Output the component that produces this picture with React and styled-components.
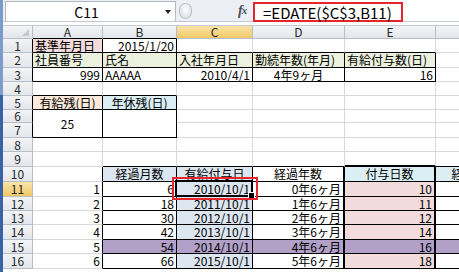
import React from 'react';
import styled, { createGlobalStyle } from 'styled-components';

const GlobalStyle = createGlobalStyle`
  html, body { margin: 0; padding: 0; background: #fff; }
  body { width: 459px; height: 272px; overflow: hidden; font-family: "Noto Sans CJK JP", sans-serif; }
`;

const COLS = ['A', 'B', 'C', 'D', 'E', 'F'];
const COL_W = [70, 74, 76, 92, 91, 92];
const ROW_H = [14, 15, 14, 14, 14, 13, 15, 14, 15, 15, 15, 14, 14, 15, 14, 15];

const C = {
  pink: '#f2dcdb',
  green: '#ebf1de',
  peach: '#fde9d9',
  aqua: '#daeef3',
  blue: '#dce6f1',
  purple: '#b1a0c7',
};

const GRID = '1px solid #d9d9d9';
const BLACK = '1px solid #000';
const THICK = '2px solid #000';
const HDR = '1px solid #b6bec8';

const boxes = [
  { c0: 0, c1: 1, r0: 1, r1: 1 },
  { c0: 0, c1: 4, r0: 2, r1: 3 },
  { c0: 0, c1: 1, r0: 5, r1: 7 },
  { c0: 1, c1: 5, r0: 10, r1: 16 },
];
const boxed = (r, c) => boxes.some((b) => r >= b.r0 && r <= b.r1 && c >= b.c0 && c <= b.c1);

const cells = {
  A1: { v: '基準年月日', bg: C.pink },
  B1: { v: '2015/1/20', a: 'right' },
  A2: { v: '社員番号', bg: C.green },
  B2: { v: '氏名', bg: C.green },
  C2: { v: '入社年月日', bg: C.green },
  D2: { v: '勤続年数(年月)', bg: C.green },
  E2: { v: '有給付与数(日)', bg: C.green },
  A3: { v: '999', a: 'right' },
  B3: { v: 'AAAAA' },
  C3: { v: '2010/4/1', a: 'right' },
  D3: { v: '4年9ヶ月', a: 'center' },
  E3: { v: '16', a: 'right' },
  A5: { v: '有給残(日)', a: 'center', bg: C.peach },
  B5: { v: '年休残(日)', a: 'center', bg: C.aqua },
  A6: { v: '25', a: 'center', span: 2 },
  B6: { v: '', span: 2 },
  B10: { v: '経過月数', a: 'center', bg: C.blue },
  C10: { v: '有給付与日', a: 'center', bg: C.blue },
  D10: { v: '経過年数', a: 'center' },
  E10: { v: '付与日数', a: 'center', bg: C.aqua },
  F10: { v: '経過付与日', a: 'center', bg: C.aqua },
};
const months = [6, 18, 30, 42, 54, 66];
const days = [10, 11, 12, 14, 16, 18];
for (let i = 0; i < 6; i++) {
  const r = 11 + i;
  const hl = r === 15 ? C.purple : null;
  cells['A' + r] = { v: String(i + 1), a: 'right' };
  cells['B' + r] = { v: String(months[i]), a: 'right', bg: hl };
  cells['C' + r] = { v: `${2010 + i}/10/1`, a: 'right', bg: hl || C.blue };
  cells['D' + r] = { v: `${i}年6ヶ月`, a: 'right', bg: hl };
  cells['E' + r] = { v: String(days[i]), a: 'right', bg: hl || C.pink };
  cells['F' + r] = { v: '', bg: hl };
}

const Window = styled.div`
  display: flex;
  width: 459px;
  height: 272px;
  overflow: hidden;
`;

const Frame = styled.div`
  flex: 0 0 3px;
  background: linear-gradient(to bottom, #7d9bcb 0, #7d9bcb 95px, #3a62a7 95px, #3a62a7 100%);
`;

const Main = styled.div`
  flex: 1;
  display: flex;
  flex-direction: column;
  min-width: 0;
`;

const FormulaBar = styled.div`
  display: flex;
  align-items: stretch;
  height: 22px;
  box-sizing: border-box;
  background: #eceff4;
  border-bottom: 1px solid #c3cad3;
`;

const NameBox = styled.div`
  margin: 1px 0 0 2px;
  width: 171px;
  height: 20px;
  box-sizing: border-box;
  background: #fff;
  border: 1px solid #b3bac4;
  border-bottom: none;
  display: flex;
  align-items: center;
  font-family: "Noto Sans CJK JP", sans-serif;
  font-size: 14px;
  line-height: 1;
  color: #000;
`;

const NameText = styled.span`
  flex: 1;
  text-align: center;
  padding-left: 2px;
`;

const DropArrow = styled.span`
  width: 0;
  height: 0;
  margin-right: 4px;
  border-left: 3.5px solid transparent;
  border-right: 3.5px solid transparent;
  border-top: 4px solid #222;
`;

const Handle = styled.div`
  margin: 3px 0 0 3px;
  width: 13px;
  height: 16px;
  box-sizing: border-box;
  border-radius: 7px;
  border: 1px solid #b8bec7;
  background: radial-gradient(ellipse at 50% 40%, #ffffff 0, #e4e7eb 60%, #c9ced5 100%);
`;

const Fx = styled.div`
  margin-left: 46px;
  width: 14px;
  display: flex;
  align-items: center;
  font-family: "Liberation Serif", serif;
  font-style: italic;
  font-weight: bold;
  font-size: 14px;
  line-height: 1;
  color: #4a4f56;
  letter-spacing: -1px;
  & small { font-size: 11px; }
`;

const Input = styled.div`
  flex: 1;
  margin-left: 1px;
  background: #fff;
  display: flex;
  align-items: flex-start;
  padding-top: 2px;
`;

const FormulaText = styled.div`
  width: 150px;
  height: 20px;
  box-sizing: border-box;
  border: 2px solid #e5262d;
  padding-left: 8px;
  display: flex;
  align-items: center;
  font-family: "Noto Sans CJK JP", sans-serif;
  font-size: 15px;
  line-height: 1;
  color: #000;
  white-space: nowrap;
`;

const Gap = styled.div`
  height: 3px;
  background: #fff;
  border-bottom: 1px solid #c3cad3;
`;

const Sheet = styled.div`
  display: grid;
  grid-template-columns: 30px ${COL_W.map((w) => w + 'px').join(' ')};
  grid-template-rows: 13px ${ROW_H.map((h) => h + 'px').join(' ')};
  font-family: "Noto Sans CJK JP", sans-serif;
`;

const HeadCell = styled.div`
  grid-row: ${(p) => p.$row};
  grid-column: ${(p) => p.$col};
  box-sizing: border-box;
  display: flex;
  align-items: center;
  justify-content: center;
  font-size: 12px;
  line-height: 1;
  color: #27292c;
  background: ${(p) => (p.$sel
    ? 'linear-gradient(to bottom, #f9e4a8, #f2c866)'
    : 'linear-gradient(to bottom, #f3f4f6, #e3e6ea)')};
  border-right: ${(p) => p.$r || HDR};
  border-bottom: ${(p) => p.$b || HDR};
  position: relative;
`;

const CornerMark = styled.span`
  position: absolute;
  right: 3px;
  bottom: 2px;
  width: 0;
  height: 0;
  border-left: 7px solid transparent;
  border-bottom: 7px solid #c3c8cf;
`;

const justify = { left: 'flex-start', center: 'center', right: 'flex-end' };

const Cell = styled.div`
  grid-row: ${(p) => p.$row} / span ${(p) => p.$span || 1};
  grid-column: ${(p) => p.$col};
  box-sizing: border-box;
  min-width: 0;
  white-space: nowrap;
  position: relative;
  display: flex;
  align-items: center;
  justify-content: ${(p) => justify[p.$align || 'left']};
  padding: 0 2px 0 2px;
  background: ${(p) => p.$bg || '#fff'};
  border-right: ${(p) => p.$r};
  border-bottom: ${(p) => p.$b};
  font-size: 12px;
  line-height: 1;
  color: #000;
  z-index: ${(p) => (p.$sel ? 2 : 'auto')};
`;

const Selection = styled.span`
  position: absolute;
  left: -2px;
  top: -2px;
  right: -1px;
  bottom: -1px;
  border: 2px solid #000;
  pointer-events: none;
`;

const FillHandle = styled.span`
  position: absolute;
  right: -3px;
  bottom: -3px;
  width: 5px;
  height: 5px;
  background: #000;
  border: 1px solid #fff;
`;

const Callout = styled.span`
  position: absolute;
  left: -5px;
  top: -5px;
  right: -6px;
  bottom: -4px;
  border: 2px solid #e5262d;
  pointer-events: none;
`;

function rightBorder(r, c) {
  if (r >= 10 && r <= 16 && (c === 3 || c === 4)) return THICK;
  if (boxed(r, c) || boxed(r, c + 1)) return BLACK;
  return GRID;
}
function bottomBorder(r, c) {
  if (c === 4 && r === 9) return THICK;
  if (boxed(r, c) || boxed(r + 1, c)) return BLACK;
  return GRID;
}

const covered = new Set(['A7', 'B7']);

export default function App() {
  const items = [];
  items.push(
    <HeadCell key="corner" $row={1} $col={1}>
      <CornerMark />
    </HeadCell>
  );
  COLS.forEach((name, c) => {
    items.push(
      <HeadCell key={'h' + name} $row={1} $col={c + 2} $sel={name === 'C'}
        $b={boxed(1, c) ? BLACK : undefined}>
        {name}
      </HeadCell>
    );
  });
  for (let r = 1; r <= 16; r++) {
    items.push(
      <HeadCell key={'r' + r} $row={r + 1} $col={1} $sel={r === 11}
        $r={boxed(r, 0) ? BLACK : undefined}>
        {r}
      </HeadCell>
    );
    COLS.forEach((name, c) => {
      const id = name + r;
      if (covered.has(id)) return;
      const d = cells[id] || {};
      const lastRow = r + (d.span || 1) - 1;
      const sel = id === 'C11';
      items.push(
        <Cell key={id} $row={r + 1} $col={c + 2} $span={d.span} $align={d.a}
          $bg={d.bg} $r={rightBorder(r, c)} $b={bottomBorder(lastRow, c)} $sel={sel}>
          {d.v}
          {sel && (
            <>
              <Selection />
              <FillHandle />
              <Callout />
            </>
          )}
        </Cell>
      );
    });
  }

  return (
    <>
      <GlobalStyle />
      <Window>
        <Frame />
        <Main>
          <FormulaBar>
            <NameBox>
              <NameText>C11</NameText>
              <DropArrow />
            </NameBox>
            <Handle />
            <Fx>f<small>x</small></Fx>
            <Input>
              <FormulaText>=EDATE($C$3,B11)</FormulaText>
            </Input>
          </FormulaBar>
          <Gap />
          <Sheet>{items}</Sheet>
        </Main>
      </Window>
    </>
  );
}
